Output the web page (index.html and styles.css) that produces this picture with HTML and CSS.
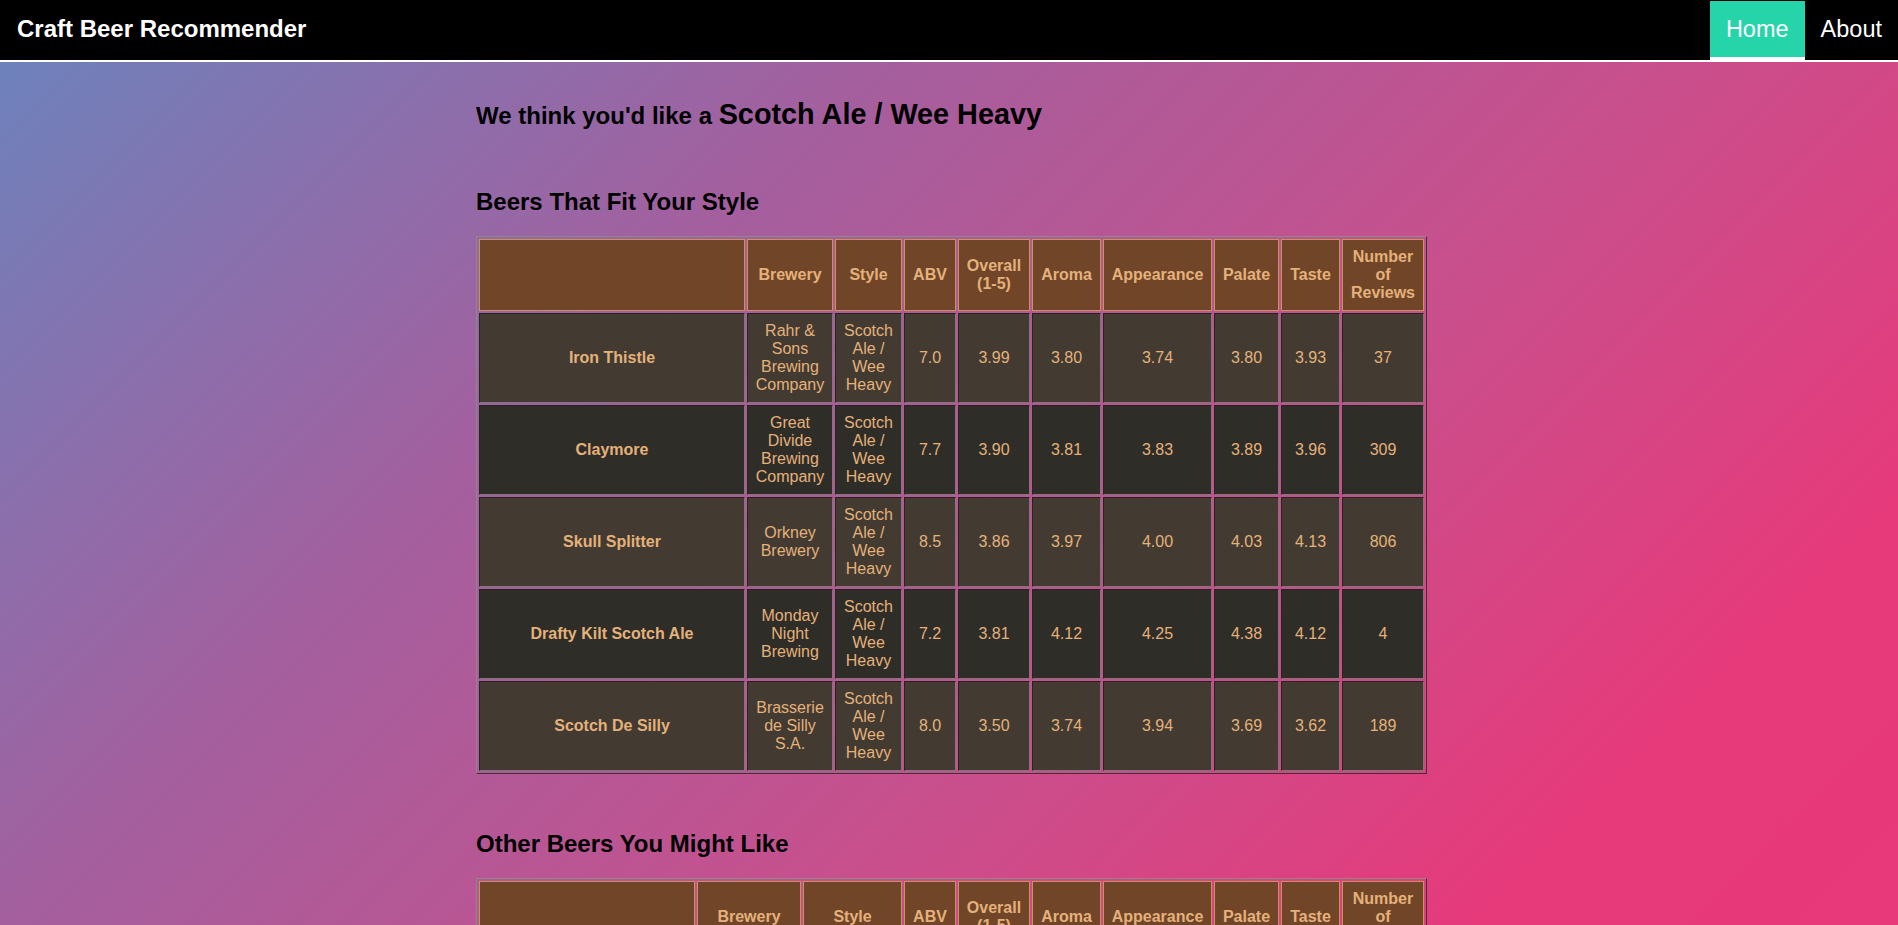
FILE: index.html
```html
<!DOCTYPE html>
<html lang="en">
<head>
<meta charset="utf-8">
<title>Craft Beer Recommender</title>
<link rel="stylesheet" href="styles.css">
</head>
<body>
<nav class="topnav">
  <a class="brand" href="#">Craft Beer Recommender</a>
  <div class="nav-links">
    <a class="nav-link active" href="#">Home</a>
    <a class="nav-link" href="#">About</a>
  </div>
</nav>
<main class="main">
  <h2 class="lead">We think you'd like a <span class="style-name">Scotch Ale / Wee Heavy</span></h2>

  <h3 class="section-title">Beers That Fit Your Style</h3>
  <table class="beers beers-style">
    <colgroup>
      <col class="c-name"><col class="c-brewery"><col class="c-style"><col class="c-abv"><col class="c-overall"><col class="c-aroma"><col class="c-appearance"><col class="c-palate"><col class="c-taste"><col class="c-reviews">
    </colgroup>
    <thead>
      <tr><th></th><th>Brewery</th><th>Style</th><th>ABV</th><th>Overall (1-5)</th><th>Aroma</th><th>Appearance</th><th>Palate</th><th>Taste</th><th>Number of Reviews</th></tr>
    </thead>
    <tbody>
      <tr><td class="name">Iron Thistle</td><td>Rahr &amp; Sons Brewing Company</td><td>Scotch Ale / Wee Heavy</td><td>7.0</td><td>3.99</td><td>3.80</td><td>3.74</td><td>3.80</td><td>3.93</td><td>37</td></tr>
      <tr><td class="name">Claymore</td><td>Great Divide Brewing Company</td><td>Scotch Ale / Wee Heavy</td><td>7.7</td><td>3.90</td><td>3.81</td><td>3.83</td><td>3.89</td><td>3.96</td><td>309</td></tr>
      <tr><td class="name">Skull Splitter</td><td>Orkney Brewery</td><td>Scotch Ale / Wee Heavy</td><td>8.5</td><td>3.86</td><td>3.97</td><td>4.00</td><td>4.03</td><td>4.13</td><td>806</td></tr>
      <tr><td class="name">Drafty Kilt Scotch Ale</td><td>Monday Night Brewing</td><td>Scotch Ale / Wee Heavy</td><td>7.2</td><td>3.81</td><td>4.12</td><td>4.25</td><td>4.38</td><td>4.12</td><td>4</td></tr>
      <tr><td class="name">Scotch De Silly</td><td>Brasserie de Silly S.A.</td><td>Scotch Ale / Wee Heavy</td><td>8.0</td><td>3.50</td><td>3.74</td><td>3.94</td><td>3.69</td><td>3.62</td><td>189</td></tr>
    </tbody>
  </table>

  <h3 class="section-title section-title-other">Other Beers You Might Like</h3>
  <table class="beers beers-other">
    <colgroup>
      <col class="c-name"><col class="c-brewery"><col class="c-style"><col class="c-abv"><col class="c-overall"><col class="c-aroma"><col class="c-appearance"><col class="c-palate"><col class="c-taste"><col class="c-reviews">
    </colgroup>
    <thead>
      <tr><th></th><th>Brewery</th><th>Style</th><th>ABV</th><th>Overall (1-5)</th><th>Aroma</th><th>Appearance</th><th>Palate</th><th>Taste</th><th>Number of Reviews</th></tr>
    </thead>
    <tbody>
      <tr><td class="name">Old Rasputin</td><td>North Coast Brewing Co.</td><td>Russian Imperial Stout</td><td>9.0</td><td>4.20</td><td>4.15</td><td>4.30</td><td>4.22</td><td>4.25</td><td>1520</td></tr>
      <tr><td class="name">Old Chub</td><td>Oskar Blues Brewery</td><td>Scottish Ale</td><td>8.0</td><td>3.85</td><td>3.78</td><td>3.90</td><td>3.82</td><td>3.88</td><td>640</td></tr>
      <tr><td class="name">Backwoods Bastard</td><td>Founders Brewing Company</td><td>Scotch Ale / Wee Heavy</td><td>10.2</td><td>4.10</td><td>4.12</td><td>4.05</td><td>4.08</td><td>4.15</td><td>512</td></tr>
    </tbody>
  </table>
</main>
</body>
</html>
```
FILE: styles.css
```css
html {
  min-height: 100%;
  background: linear-gradient(135deg, #6a84be 0%, #a45f9e 33%, #c94f8c 62%, #e63a7b 85%, #e8397a 100%) fixed;
}

body {
  margin: 0;
  font-family: "Liberation Sans", Arial, Helvetica, sans-serif;
  color: #000;
}

/* ---------- top navigation ---------- */
.topnav {
  display: flex;
  justify-content: space-between;
  align-items: flex-start;
  height: 60px;
  padding-left: 17px;
  background: #000;
  border-bottom: 2px solid #fff;
}

.brand {
  color: #fff;
  font-size: 24px;
  font-weight: bold;
  line-height: 58px;
  text-decoration: none;
}

.nav-links {
  display: flex;
}

.nav-link {
  margin-top: 1px;
  padding: 0 16px;
  color: #fff;
  font-size: 23.5px;
  line-height: 56px;
  text-decoration: none;
}

.nav-link.active {
  background: #26d4aa;
  border-bottom: 3px solid #fff;
}

/* ---------- content ---------- */
.main {
  width: 951px;
  margin-left: 476px;
  padding-bottom: 40px;
}

.lead {
  margin: 36px 0 0;
  font-size: 24px;
  font-weight: bold;
}

.style-name {
  font-size: 28.8px;
  font-weight: bold;
}

.section-title {
  margin: 57px 0 20px;
  font-size: 24px;
  font-weight: bold;
}

.section-title-other {
  margin: 56px 0 20px;
}

/* ---------- tables ---------- */
.beers {
  table-layout: fixed;
  width: 951px;
  border-spacing: 2px;
  border: 1px outset #8a8a8a;
  font-size: 16px;
  color: #e4b17b;
  text-align: center;
}

.beers th,
.beers td {
  vertical-align: middle;
}

.beers th {
  padding: 8px 2px;
  background: #714628;
  border: 1px solid #c9925f;
  font-weight: bold;
}

.beers td {
  padding: 8px 2px;
  border: 1px inset #7a7a7a;
}

.beers tbody tr:nth-child(odd) td {
  background: #433b31;
}

.beers tbody tr:nth-child(even) td {
  background: #2f2d28;
}

.beers td.name {
  font-weight: bold;
}

.beers-style .c-name { width: 266px; }
.beers-style .c-brewery { width: 86px; }
.beers-style .c-style { width: 67px; }

.beers-other .c-name { width: 216px; }
.beers-other .c-brewery { width: 104px; }
.beers-other .c-style { width: 99px; }

.beers .c-abv { width: 52px; }
.beers .c-overall { width: 72px; }
.beers .c-aroma { width: 69px; }
.beers .c-appearance { width: 109px; }
.beers .c-palate { width: 65px; }
.beers .c-taste { width: 59px; }
.beers .c-reviews { width: 82px; }
```
